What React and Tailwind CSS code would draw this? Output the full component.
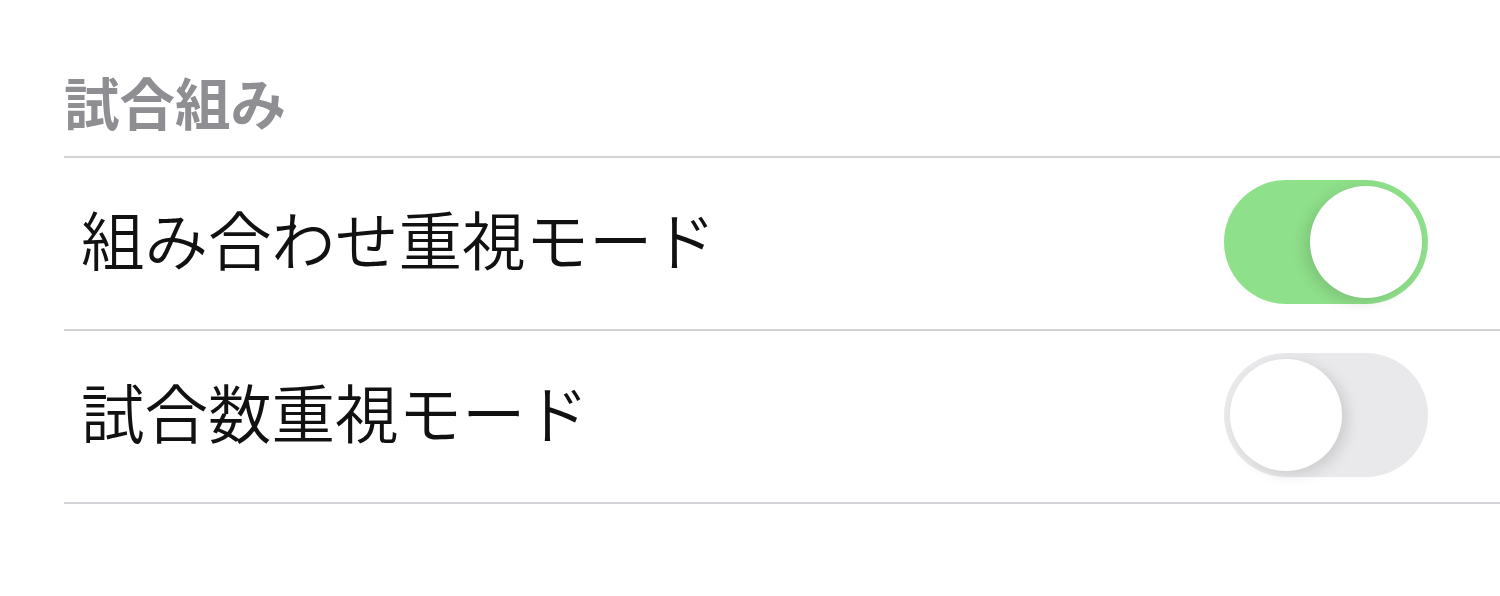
import { useState } from "react";

const Toggle = ({ on, onChange }) => (
  <button
    onClick={onChange}
    className={`relative w-[204px] h-[124px] rounded-full transition-colors ${on ? "bg-[#8fe08a]" : "bg-[#e9e9eb]"}`}
  >
    <span
      className={`absolute top-[6px] w-[112px] h-[112px] rounded-full bg-white transition-all ${
        on ? "left-[86px] shadow-[-6px_4px_14px_rgba(0,0,0,0.12)]" : "left-[6px] shadow-[6px_4px_14px_rgba(0,0,0,0.12)]"
      }`}
    />
  </button>
);

export default function App() {
  const [combo, setCombo] = useState(true);
  const [count, setCount] = useState(false);

  const rows = [
    { label: "組み合わせ重視モード", on: combo, toggle: () => setCombo(!combo) },
    { label: "試合数重視モード", on: count, toggle: () => setCount(!count) },
  ];

  return (
    <div className="w-[1500px] h-[596px] bg-white font-['Noto_Sans_CJK_JP',sans-serif]">
      <div className="pl-[64px]">
        <div className="h-[156px] flex items-end pb-[27px]">
          <h2 className="text-[55.5px] leading-none font-semibold text-[#8e8e93]">試合組み</h2>
        </div>
        <div className="border-t-2 border-[#d1d1d6]">
          {rows.map((r) => (
            <div
              key={r.label}
              className="h-[173px] flex items-center justify-between pl-[17px] pr-[72px] pb-[4px] border-b-2 border-[#d1d1d6]"
            >
              <span className="text-[63.5px] leading-none font-[350] text-[#111] pb-[8px]">{r.label}</span>
              <Toggle on={r.on} onChange={r.toggle} />
            </div>
          ))}
        </div>
      </div>
    </div>
  );
}
